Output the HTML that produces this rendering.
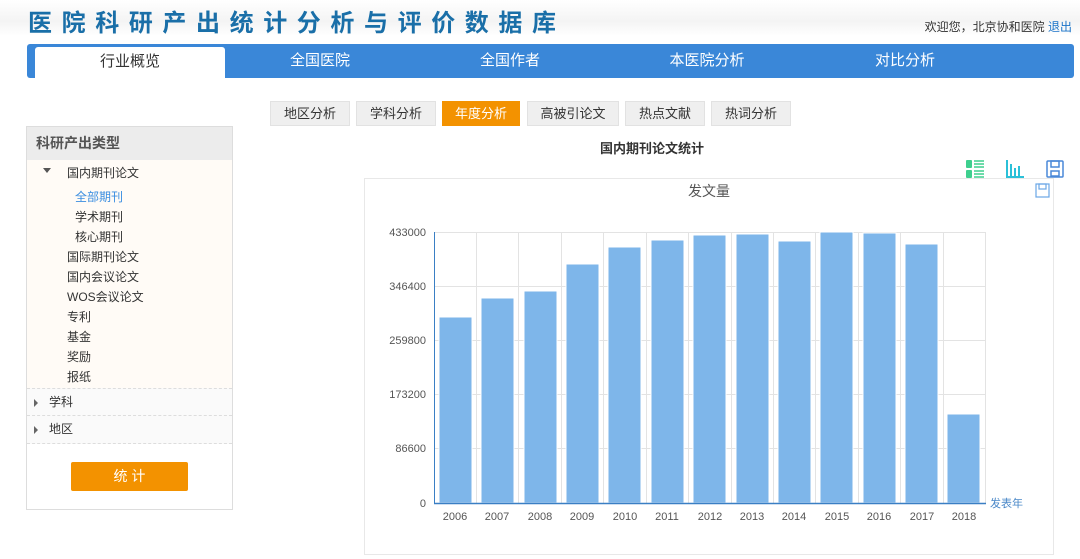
<!DOCTYPE html>
<html><head><meta charset="utf-8"><style>
*{margin:0;padding:0;box-sizing:border-box}
body{width:1080px;height:559px;overflow:hidden;background:#fff;font-family:"Liberation Sans","Noto Sans CJK SC",sans-serif;font-size:12px;color:#333;position:relative}
.abs{position:absolute}
.hdr{left:0;top:0;width:1080px;height:36px;background:linear-gradient(#fff,#f4f4f4 60%,#fff)}
.title{left:28px;top:3px;font-family:"Noto Sans CJK SC",sans-serif;font-size:24px;color:#1a6fa8;letter-spacing:9.6px;font-weight:bold;white-space:nowrap}
.welcome{right:8px;top:18px;font-size:12px;color:#333}
.welcome a{color:#1a73c8}
.nav{left:27px;top:44px;width:1047px;height:34px;background:#3a87d8;border-radius:3px}
.nav div{position:absolute;top:0;height:34px;line-height:34px;width:190px;text-align:center;color:#fff;font-size:15px}
.nav .on{background:#fff;color:#333;top:3px;height:31px;line-height:30px;border-radius:3px 3px 0 0}
.tab{top:101px;height:25px;line-height:24px;background:#efefef;border:1px solid #e2e2e2;text-align:center;font-size:13px;color:#333}
.tab.on{background:#f39200;color:#fff;border-color:#f39200}
.side{left:26px;top:126px;width:207px;height:384px;border:1px solid #ddd;background:#fff}
.side .h{height:33px;line-height:32px;background:#ececec;padding-left:9px;font-size:14px;color:#555;font-weight:bold}
.tree{background:#fffbf6;height:228px;position:relative}
.tree div{position:absolute;font-size:12px;color:#333}
.row{position:absolute;left:0;width:205px;height:28px;line-height:27px;background:#fafafa;border-bottom:1px dashed #ddd;padding-left:22px;font-size:12px}
.btn{left:71px;top:462px;width:117px;height:29px;background:#f39200;color:#fff;text-align:center;line-height:29px;font-size:14px;border-radius:2px}
</style></head><body>
<div class="abs hdr"></div>
<div class="abs title">医院科研产出统计分析与评价数据库</div>
<div class="abs welcome">欢迎您，北京协和医院 <a>退出</a></div>
<div class="abs nav">
<div class="on" style="left:8px">行业概览</div>
<div style="left:198px">全国医院</div>
<div style="left:388px">全国作者</div>
<div style="left:585px">本医院分析</div>
<div style="left:783px">对比分析</div>
</div>
<div class="abs tab" style="left:270px;width:80px">地区分析</div>
<div class="abs tab" style="left:356px;width:80px">学科分析</div>
<div class="abs tab on" style="left:442px;width:78px">年度分析</div>
<div class="abs tab" style="left:527px;width:92px">高被引论文</div>
<div class="abs tab" style="left:625px;width:80px">热点文献</div>
<div class="abs tab" style="left:711px;width:80px">热词分析</div>
<div class="abs side">
<div class="h">科研产出类型</div>
<div class="tree">
<div style="left:16px;top:8px;width:0;height:0;border-left:4px solid transparent;border-right:4px solid transparent;border-top:5px solid #555"></div>
<div style="left:40px;top:4px">国内期刊论文</div>
<div style="left:48px;top:28px;color:#3b8ee0">全部期刊</div>
<div style="left:48px;top:48px">学术期刊</div>
<div style="left:48px;top:68px">核心期刊</div>
<div style="left:40px;top:88px">国际期刊论文</div>
<div style="left:40px;top:108px">国内会议论文</div>
<div style="left:40px;top:128px">WOS会议论文</div>
<div style="left:40px;top:148px">专利</div>
<div style="left:40px;top:168px">基金</div>
<div style="left:40px;top:188px">奖励</div>
<div style="left:40px;top:208px">报纸</div>
</div>
<div class="row" style="top:261px;border-top:1px dashed #ddd"><span style="position:absolute;left:7px;top:10px;border-top:4px solid transparent;border-bottom:4px solid transparent;border-left:4px solid #666"></span>学科</div>
<div class="row" style="top:289px"><span style="position:absolute;left:7px;top:10px;border-top:4px solid transparent;border-bottom:4px solid transparent;border-left:4px solid #666"></span>地区</div>
</div>
<div class="abs btn">统 计</div>
<div class="abs" style="left:600px;top:138px;font-size:13px;font-weight:bold;color:#333">国内期刊论文统计</div>
<svg class="abs" style="left:0;top:0" width="1080" height="559">
<g fill="#3ecf8e"><rect x="966" y="160" width="6" height="8" rx="1"/><rect x="966" y="170" width="6" height="8" rx="1"/></g>
<g stroke="#3ecf8e" stroke-width="1.5"><line x1="974" y1="161" x2="984" y2="161"/><line x1="974" y1="164" x2="984" y2="164"/><line x1="974" y1="167" x2="984" y2="167"/><line x1="974" y1="171" x2="984" y2="171"/><line x1="974" y1="174" x2="984" y2="174"/><line x1="974" y1="177" x2="984" y2="177"/></g>
<g stroke="#2bc0d8" stroke-width="2" fill="none"><path d="M1007 160V177H1024"/><line x1="1011" y1="177" x2="1011" y2="164"/><line x1="1015" y1="177" x2="1015" y2="168"/><line x1="1019" y1="177" x2="1019" y2="166"/></g>
<g stroke="#4a88d8" stroke-width="1.5" fill="none"><rect x="1047" y="161" width="16" height="16" rx="1"/><rect x="1051" y="161" width="8" height="6"/><rect x="1051" y="171" width="8" height="5"/></g>
<rect x="364.5" y="178.5" width="689" height="376" fill="#fff" stroke="#e8e8e8"/>
<text x="709" y="196" font-size="14" fill="#555" text-anchor="middle">发文量</text>
<g stroke="#6aa6e6" stroke-width="1.2" fill="none"><rect x="1036" y="184" width="13" height="13"/><rect x="1039" y="184" width="7" height="5"/></g>
<g stroke="#e3e3e3" stroke-width="1">
<line x1="434" y1="232.5" x2="985" y2="232.5"/><line x1="434" y1="286.5" x2="985" y2="286.5"/><line x1="434" y1="340.5" x2="985" y2="340.5"/><line x1="434" y1="394.5" x2="985" y2="394.5"/><line x1="434" y1="448.5" x2="985" y2="448.5"/>
<line x1="476.5" y1="232" x2="476.5" y2="503"/><line x1="518.5" y1="232" x2="518.5" y2="503"/><line x1="561.5" y1="232" x2="561.5" y2="503"/><line x1="603.5" y1="232" x2="603.5" y2="503"/><line x1="646.5" y1="232" x2="646.5" y2="503"/><line x1="688.5" y1="232" x2="688.5" y2="503"/><line x1="731.5" y1="232" x2="731.5" y2="503"/><line x1="773.5" y1="232" x2="773.5" y2="503"/><line x1="815.5" y1="232" x2="815.5" y2="503"/><line x1="858.5" y1="232" x2="858.5" y2="503"/><line x1="900.5" y1="232" x2="900.5" y2="503"/><line x1="943.5" y1="232" x2="943.5" y2="503"/><line x1="985.5" y1="232" x2="985.5" y2="503"/>
</g>
<g fill="#7eb6ea" stroke="#fff" stroke-width="1">
<rect x="439" y="317" width="33" height="186"/><rect x="481" y="298" width="33" height="205"/><rect x="524" y="291" width="33" height="212"/><rect x="566" y="264" width="33" height="239"/><rect x="608" y="247" width="33" height="256"/><rect x="651" y="240" width="33" height="263"/><rect x="693" y="235" width="33" height="268"/><rect x="736" y="234" width="33" height="269"/><rect x="778" y="241" width="33" height="262"/><rect x="820" y="232" width="33" height="271"/><rect x="863" y="233" width="33" height="270"/><rect x="905" y="244" width="33" height="259"/><rect x="947" y="414" width="33" height="89"/>
</g>
<line x1="434.5" y1="232" x2="434.5" y2="504" stroke="#3a7fc4" stroke-width="1"/>
<line x1="434" y1="503.5" x2="986" y2="503.5" stroke="#3a7fc4" stroke-width="1.5"/>
<g font-size="11" fill="#555" text-anchor="end">
<text x="426" y="236">433000</text><text x="426" y="290">346400</text><text x="426" y="344">259800</text><text x="426" y="398">173200</text><text x="426" y="452">86600</text><text x="426" y="507">0</text></g>
<g font-size="11" fill="#555" text-anchor="middle">
<text x="455" y="520">2006</text><text x="497" y="520">2007</text><text x="540" y="520">2008</text><text x="582" y="520">2009</text><text x="625" y="520">2010</text><text x="667" y="520">2011</text><text x="710" y="520">2012</text><text x="752" y="520">2013</text><text x="794" y="520">2014</text><text x="837" y="520">2015</text><text x="879" y="520">2016</text><text x="922" y="520">2017</text><text x="964" y="520">2018</text></g>
<text x="990" y="507" font-size="11" fill="#4a88c8">发表年</text>
</svg>
</body></html>
